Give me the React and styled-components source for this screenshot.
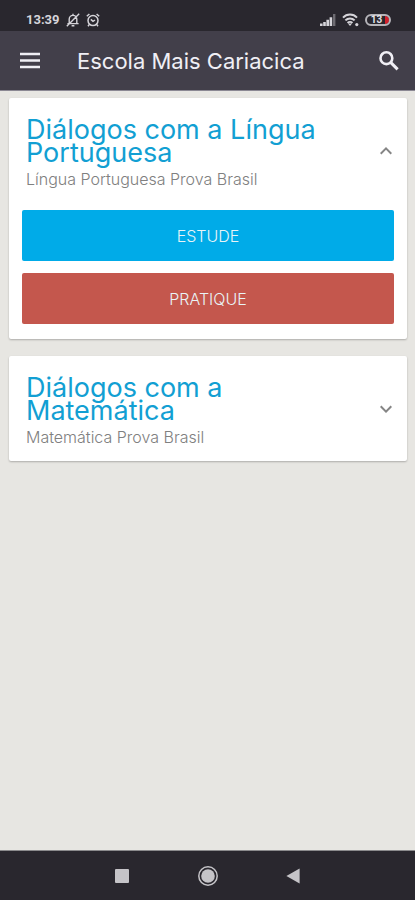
import React, { useState } from "react";
import styled, { createGlobalStyle } from "styled-components";
import { MdKeyboardArrowUp, MdKeyboardArrowDown } from "react-icons/md";

const courses = [
  {
    id: "portugues",
    title: "Diálogos com a Língua Portuguesa",
    subtitle: "Língua Portuguesa Prova Brasil",
  },
  {
    id: "matematica",
    title: "Diálogos com a Matemática",
    subtitle: "Matemática Prova Brasil",
  },
];

const MutedBellIcon = () => (
  <svg width="14" height="14" viewBox="0 0 14 14" fill="none" stroke="currentColor" strokeWidth="1.4">
    <path d="M1.4 10.6h11.2M3.2 10.5V6.2a3.8 3.8 0 0 1 7.6 0v4.3M7 .8v1.6M5.6 12.8h2.8M.8 13.2 13.2.8" />
  </svg>
);

const AlarmIcon = () => (
  <svg width="14" height="14" viewBox="0 0 14 14" fill="none" stroke="currentColor" strokeWidth="1.5">
    <circle cx="7" cy="7.6" r="5" />
    <path d="M.8 3.2 3.4 1M13.2 3.2 10.6 1M4.8 6.4 7 8.4l2-1.4M3.4 11.4l-1.4 1.8M10.6 11.4l1.4 1.8" />
  </svg>
);

const SignalIcon = () => (
  <svg width="16" height="12" viewBox="0 0 16 12" fill="currentColor">
    <path d="M0 9.6h2.6V12H0zM3.2 8h2.6v4H3.2zM6.4 5.8H9V12H6.4zM9.6 3.2h2.6V12H9.6z" />
    <path d="M13 0h2.4v12H13z" opacity=".4" />
  </svg>
);

const WifiIcon = () => (
  <svg width="17" height="14" viewBox="0 0 17 14" fill="none" stroke="currentColor" strokeWidth="2">
    <path d="M1 4.6a9.6 9.6 0 0 1 14 0M3.4 7.4a6.4 6.4 0 0 1 9.2 0M5.6 10a3.4 3.4 0 0 1 4.8 0" />
    <path d="M6 10.6h4L8 13z" fill="currentColor" stroke="none" />
    <circle cx="14.8" cy="11.6" r="1.6" fill="currentColor" stroke="none" />
  </svg>
);

const MenuIcon = () => (
  <svg width="28" height="28" viewBox="0 0 28 28" fill="none" stroke="currentColor" strokeWidth="2.6">
    <path d="M4 7h20M4 13.5h20M4 20h20" />
  </svg>
);

const SearchIcon = () => (
  <svg width="26" height="26" viewBox="0 0 26 26" fill="none" stroke="currentColor" strokeWidth="2.6">
    <circle cx="10.4" cy="10.2" r="5.9" />
    <path d="m14.6 14.4 7 7" strokeWidth="3" />
  </svg>
);

const CourseCard = ({ course, defaultOpen }) => {
  const [open, setOpen] = useState(defaultOpen);

  return (
    <Card>
      <CardHeader>
        <div>
          <CardTitle>{course.title}</CardTitle>
          <CardSubtitle>{course.subtitle}</CardSubtitle>
        </div>
        <Toggle
          type="button"
          aria-label={open ? "Recolher" : "Expandir"}
          aria-expanded={open}
          onClick={() => setOpen(!open)}
        >
          {open ? <MdKeyboardArrowUp /> : <MdKeyboardArrowDown />}
        </Toggle>
      </CardHeader>
      {open && (
        <Actions>
          <ActionButton type="button" $color="#00abe8">
            ESTUDE
          </ActionButton>
          <ActionButton type="button" $color="#c4574d">
            PRATIQUE
          </ActionButton>
        </Actions>
      )}
    </Card>
  );
};

const App = () => {
  return (
    <>
      <GlobalStyle />
      <Screen>
        <StatusBar>
          <StatusGroup>
            <Clock>13:39</Clock>
            <MutedBellIcon />
            <AlarmIcon />
          </StatusGroup>
          <StatusGroup>
            <SignalIcon />
            <WifiIcon />
            <Battery>13</Battery>
          </StatusGroup>
        </StatusBar>
        <Toolbar>
          <IconButton type="button" aria-label="Menu">
            <MenuIcon />
          </IconButton>
          <ToolbarTitle>Escola Mais Cariacica</ToolbarTitle>
          <IconButton type="button" aria-label="Buscar">
            <SearchIcon />
          </IconButton>
        </Toolbar>
        <Content>
          {courses.map((course, index) => (
            <CourseCard key={course.id} course={course} defaultOpen={index === 0} />
          ))}
        </Content>
        <SystemNav>
          <IconButton type="button" aria-label="Recentes">
            <svg width="22" height="22" viewBox="0 0 22 22" fill="currentColor">
              <rect x="4" y="4" width="14" height="14" rx="1" />
            </svg>
          </IconButton>
          <IconButton type="button" aria-label="Início">
            <svg width="22" height="22" viewBox="0 0 22 22" fill="currentColor">
              <circle cx="11" cy="11" r="6.8" />
              <circle cx="11" cy="11" r="9.2" fill="none" stroke="currentColor" strokeWidth="1.5" />
            </svg>
          </IconButton>
          <IconButton type="button" aria-label="Voltar">
            <svg width="22" height="22" viewBox="0 0 22 22" fill="currentColor">
              <path d="M3.4 11 16.6 3.6v14.8z" />
            </svg>
          </IconButton>
        </SystemNav>
      </Screen>
    </>
  );
};

export default App;

const GlobalStyle = createGlobalStyle`
  * {
    box-sizing: border-box;
  }

  body {
    margin: 0;
    background: #e7e6e2;
    font-family: Inter, "Open Sans", sans-serif;
  }

  button {
    padding: 0;
    border: none;
    background: none;
    font-family: inherit;
    cursor: pointer;
  }

  svg {
    display: block;
  }
`;

const Screen = styled.div`
  display: flex;
  flex-direction: column;
  min-height: 100vh;
`;

const StatusBar = styled.div`
  display: flex;
  align-items: center;
  justify-content: space-between;
  height: 31px;
  padding: 8px 24px 0 26px;
  background: #29272e;
  color: #d6d5da;
`;

const StatusGroup = styled.div`
  display: flex;
  align-items: center;
  gap: 6px;
`;

const Clock = styled.span`
  font-family: Roboto, sans-serif;
  font-size: 13px;
  font-weight: 700;
`;

const Battery = styled.span`
  width: 26px;
  height: 12px;
  padding-right: 3px;
  border: 2px solid #b5b4b9;
  border-radius: 6px;
  background: linear-gradient(to right, transparent 18px, #d3202c 18px) padding-box;
  color: #e4e3e8;
  font-family: Roboto, sans-serif;
  font-size: 10px;
  font-weight: 700;
  line-height: 8px;
  text-align: center;
`;

const Toolbar = styled.header`
  display: flex;
  align-items: center;
  height: 60px;
  padding: 0 13px 0 16px;
  border-bottom: 1px solid #8b8893;
  background: #423f4a;
  color: #f0eff5;
`;

const IconButton = styled.button`
  color: inherit;
`;

const ToolbarTitle = styled.h1`
  flex: 1;
  margin: 0;
  padding-left: 33px;
  font-size: 22px;
  font-weight: 400;
  line-height: 28px;
`;

const Content = styled.main`
  display: flex;
  flex: 1;
  flex-direction: column;
  gap: 17px;
  padding: 7px 8px 16px 9px;
`;

const Card = styled.section`
  border-radius: 2px;
  background: #fff;
  box-shadow: 0 1px 2px rgba(0, 0, 0, 0.25);
`;

const CardHeader = styled.div`
  display: flex;
  align-items: center;
  justify-content: space-between;
  gap: 32px;
  padding: 20px 9px 15px 17px;
`;

const CardTitle = styled.h2`
  margin: 0;
  color: #129fd3;
  font-size: 27px;
  font-weight: 400;
  line-height: 23px;
`;

const CardSubtitle = styled.p`
  margin: 6px 0 0;
  color: #808080;
  font-size: 16px;
  font-weight: 300;
  line-height: 18px;
`;

const Toggle = styled.button`
  padding-bottom: 4px;
  color: #858585;
  font-size: 24px;
`;

const Actions = styled.div`
  display: flex;
  flex-direction: column;
  gap: 12px;
  padding: 7px 13px 15px;
`;

const ActionButton = styled.button`
  height: 51px;
  border-radius: 2px;
  background: ${({ $color }) => $color};
  color: #e9f4f7;
  font-size: 16px;
  font-weight: 300;
`;

const SystemNav = styled.nav`
  display: flex;
  align-items: center;
  justify-content: center;
  gap: 64px;
  height: 50px;
  border-top: 1px solid #8b8b8d;
  background: #29272e;
  color: #c5c4c8;
`;
